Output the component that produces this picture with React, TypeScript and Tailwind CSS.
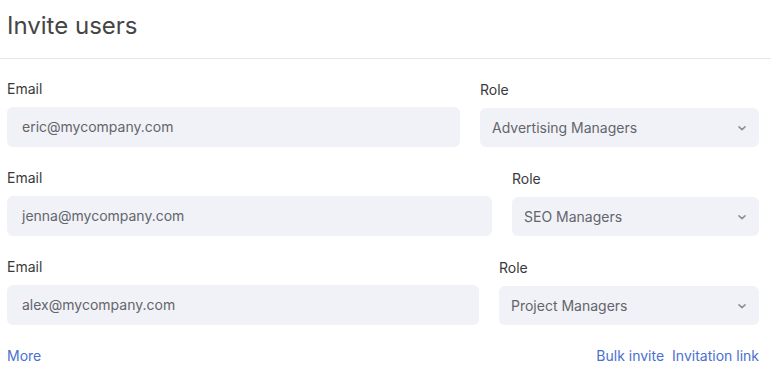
import React from "react";

const rows = [
  { email: "eric@mycompany.com", role: "Advertising Managers", w: "w-[279px]" },
  { email: "jenna@mycompany.com", role: "SEO Managers", w: "w-[247px]" },
  { email: "alex@mycompany.com", role: "Project Managers", w: "w-[260px]" },
];

function Chevron() {
  return (
    <svg width="10" height="10" viewBox="0 0 10 10" className="shrink-0">
      <path d="M2 3.8 L5 6.6 L8 3.8" fill="none" stroke="#8b909c" strokeWidth="1.6" strokeLinecap="round" strokeLinejoin="round" />
    </svg>
  );
}

export default function App() {
  return (
    <div className="w-[771px] h-[378px] bg-white overflow-hidden" style={{ fontFamily: "Inter, 'Noto Sans', sans-serif" }}>
      <div className="h-[59px] border-b border-[#e6e7ea] pl-[7px] pt-[10px]">
        <h1 className="text-[24px] leading-[32px] text-[#454545] font-normal">Invite users</h1>
      </div>
      <div className="pl-[7px] pr-[12px] pt-[20px]">
        {rows.map((r, i) => (
          <div key={i} className="flex gap-5 mb-[21px]">
            <div className="flex-1 flex flex-col">
              <label className="text-sm leading-5 text-[#3a3a3a] mb-[8px]">Email</label>
              <div className="h-10 rounded-md bg-[#f1f2f7] flex items-center pl-[15px] text-sm text-[#63656c]">{r.email}</div>
            </div>
            <div className={`${r.w} flex flex-col pt-px`}>
              <label className="text-sm leading-5 text-[#3a3a3a] mb-[8px]">Role</label>
              <div className="h-[39px] rounded-md bg-[#f1f2f7] flex items-center justify-between pl-3 pr-[12px] text-sm text-[#63656c]">
                <span>{r.role}</span>
                <Chevron />
              </div>
            </div>
          </div>
        ))}
        <div className="flex justify-between items-center mt-[1px] text-[14px] leading-5 text-[#4a70cf]">
          <span>More</span>
          <div className="flex gap-[8px]">
            <span>Bulk invite</span>
            <span>Invitation link</span>
          </div>
        </div>
      </div>
    </div>
  );
}
